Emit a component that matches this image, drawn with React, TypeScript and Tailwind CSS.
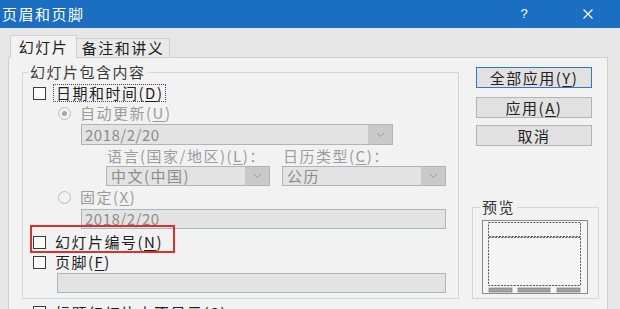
import React from "react";

const U = ({ c }: { c: string }) => <span className="underline underline-offset-2">{c}</span>;

function CheckBox() {
  return <div className="w-[13px] h-[13px] shrink-0 border border-[#3a3a3a] bg-[#fbfbfb]" />;
}

function Radio({ checked }: { checked?: boolean }) {
  return (
    <div className="w-[13px] h-[13px] shrink-0 rounded-full border border-[#bdbdbd] bg-[#f2f2f2] flex items-center justify-center">
      {checked && <div className="w-[5px] h-[5px] rounded-full bg-[#a5a5a5]" />}
    </div>
  );
}

function Chevron() {
  return (
    <svg width="9" height="6" viewBox="0 0 9 6">
      <polyline points="1,1 4.5,4.5 8,1" fill="none" stroke="#9a9a9a" strokeWidth="1" />
    </svg>
  );
}

function Combo({ text, w }: { text: string; w: string }) {
  return (
    <div className={`${w} h-[20px] border border-[#aab5c4] bg-[#e3e3e3] flex items-stretch`}>
      <div className="flex-1 pl-[4px] flex items-center text-[#8c8c8c]">{text}</div>
      <div className="w-[24px] bg-[#c9c9c9] flex items-center justify-center">
        <Chevron />
      </div>
    </div>
  );
}

function Btn({ children, def }: { children: React.ReactNode; def?: boolean }) {
  return (
    <div
      className={`w-[116px] h-[21px] flex items-center justify-center bg-[#e1e1e1] text-[#222] border ${
        def ? "border-[#2a79cf]" : "border-[#b4b4b4]"
      }`}
    >
      {children}
    </div>
  );
}

function Preview() {
  return (
    <svg width="106" height="74" viewBox="0 0 106 74">
      <rect x="0.5" y="0.5" width="105" height="73" fill="#f5f5f5" stroke="#8a8a8a" />
      <rect x="6.5" y="2.5" width="92" height="14" fill="none" stroke="#555" strokeDasharray="2 1.2" />
      <rect x="6.5" y="17.5" width="92" height="48" fill="none" stroke="#555" strokeDasharray="2 1.2" />
      <rect x="7" y="68" width="23" height="4" fill="#a4a4a4" stroke="#6e6e6e" strokeWidth="0.6" />
      <rect x="36" y="68" width="32" height="4" fill="#a4a4a4" stroke="#6e6e6e" strokeWidth="0.6" />
      <rect x="75" y="68" width="23" height="4" fill="#a4a4a4" stroke="#6e6e6e" strokeWidth="0.6" />
    </svg>
  );
}

export default function App() {
  return (
    <div className="w-[620px] h-[309px] overflow-hidden bg-[#e7e7e7] text-[15px] leading-[20px] tracking-[1.5px] text-[#1e1e1e] [font-family:'Noto_Sans_CJK_SC','Microsoft_YaHei',sans-serif]">
      {/* Title bar */}
      <div className="h-[28px] bg-[#1b6fc3] flex items-center text-white">
        <div className="flex-1 pl-[2px] text-[15px]">页眉和页脚</div>
        <div className="w-[20px] text-center text-[13px] [font-family:'Liberation_Sans',sans-serif] tracking-normal">?</div>
        <div className="w-[20px] ml-[44px] mr-[22px] flex items-center justify-center">
          <svg width="10" height="10" viewBox="0 0 10 10">
            <line x1="0.5" y1="0.5" x2="9.5" y2="9.5" stroke="white" strokeWidth="1.3" />
            <line x1="9.5" y1="0.5" x2="0.5" y2="9.5" stroke="white" strokeWidth="1.3" />
          </svg>
        </div>
      </div>

      {/* Tabs */}
      <div className="h-[29px] flex items-end pl-[10px]">
        <div className="w-[67px] h-[23px] -mb-[1px] relative z-10 bg-[#f2f2f2] border border-b-0 border-[#cfcfcf] flex items-center justify-center">
          幻灯片
        </div>
        <div className="w-[93px] h-[19px] bg-[#e9e9e9] border border-l-0 border-b-0 border-[#cfcfcf] flex items-center justify-center">
          备注和讲义
        </div>
      </div>

      {/* Panel */}
      <div className="ml-[8px] w-[600px] h-[252px] bg-[#f2f2f2] border border-b-0 border-[#d0d0d0] flex flex-col">
        <div className="flex">
          {/* Group box */}
          <div className="ml-[13px] mt-[14px] w-[437px] h-[227px] border border-[#d6d6d6] relative flex flex-col">
            <div className="absolute left-[5px] -top-[11px] bg-[#f2f2f2] px-[2px] text-[#3a3a3a]">幻灯片包含内容</div>

            <div className="mt-[10px] h-[20px] flex items-center">
              <div className="ml-[10px]"><CheckBox /></div>
              <div className="ml-[7px] px-[2px] h-[18px] flex items-center border border-dotted border-[#444]">
                日期和时间(<U c="D" />)
              </div>
            </div>

            <div className="h-[18px] mt-[1px] flex items-center text-[#9c9c9c]">
              <div className="ml-[35px]"><Radio checked /></div>
              <div className="ml-[9px]">自动更新(<U c="U" />)</div>
            </div>

            <div className="mt-[2px] ml-[58px] w-[312px] h-[21px] border border-[#aab5c4] bg-[#e3e3e3] flex items-stretch">
              <div className="flex-1 pl-[3px] flex items-center text-[#8c8c8c] tracking-[0.5px]">2018/2/20</div>
              <div className="w-[24px] bg-[#c9c9c9] flex items-center justify-center"><Chevron /></div>
            </div>

            <div className="h-[21px] flex items-center text-[#9c9c9c]">
              <div className="ml-[84px] w-[176px]">语言(国家/地区)(<U c="L" />)：</div>
              <div>日历类型(<U c="C" />)：</div>
            </div>

            <div className="flex ml-[83px] gap-[12px]">
              <Combo text="中文(中国)" w="w-[164px]" />
              <Combo text="公历" w="w-[164px]" />
            </div>

            <div className="h-[20px] mt-[1px] flex items-center text-[#9c9c9c]">
              <div className="ml-[35px]"><Radio /></div>
              <div className="ml-[9px]">固定(<U c="X" />)</div>
            </div>

            <div className="mt-[2px] ml-[58px] w-[365px] h-[20px] border border-[#aab5c4] bg-[#e3e3e3] pl-[3px] flex items-center text-[#8c8c8c] tracking-[0.5px]">
              2018/2/20
            </div>

            <div className="mt-[3px] h-[20px] flex items-center">
              <div className="ml-[10px]"><CheckBox /></div>
              <div className="ml-[9px]">幻灯片编号(<U c="N" />)</div>
            </div>

            <div className="h-[20px] flex items-center">
              <div className="ml-[10px]"><CheckBox /></div>
              <div className="ml-[9px]">页脚(<U c="F" />)</div>
            </div>

            <div className="mt-[1px] ml-[34px] w-[389px] h-[20px] border border-[#aab5c4] bg-[#e3e3e3]" />

            {/* red annotation */}
            <div className="absolute left-[7px] top-[152px] w-[145px] h-[28px] border-2 border-[#d9322c]" />
          </div>

          {/* Right column */}
          <div className="flex flex-col">
            <div className="ml-[17px] mt-[9px]">
              <Btn def>全部应用(<U c="Y" />)</Btn>
            </div>
            <div className="ml-[17px] mt-[9px]">
              <Btn>应用(<U c="A" />)</Btn>
            </div>
            <div className="ml-[17px] mt-[7px]">
              <Btn>取消</Btn>
            </div>
            <div className="ml-[13px] mt-[61px] w-[127px] h-[92px] border border-[#d6d6d6] relative">
              <div className="absolute left-[7px] -top-[11px] bg-[#f2f2f2] px-[2px] text-[#333]">预览</div>
              <div className="mt-[12px] ml-[9px]">
                <Preview />
              </div>
            </div>
          </div>
        </div>

        <div className="mt-[6px] h-[20px] flex items-start">
          <div className="ml-[24px] mt-[1px]"><CheckBox /></div>
          <div className="ml-[9px] -mt-[2px]">标题幻灯片中不显示(<U c="S" />)</div>
        </div>
      </div>
    </div>
  );
}
